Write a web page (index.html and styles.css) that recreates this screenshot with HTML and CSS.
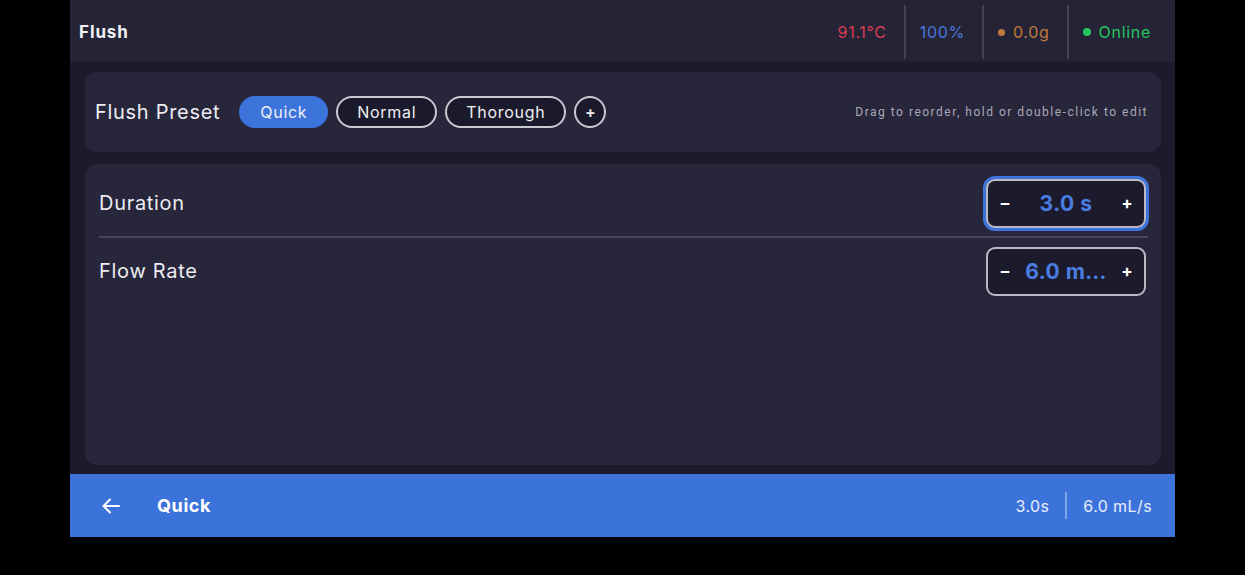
FILE: index.html
```html
<!DOCTYPE html>
<html lang="en">
	<head>
		<meta charset="UTF-8" />
		<title>Flush</title>
		<link rel="stylesheet" href="styles.css">
	</head>
	<body>
		<div class="app">
			<header class="topbar">
				<h1>Flush</h1>
				<div class="status">
					<span class="stat temp">91.1°C</span>
					<span class="stat level">100%</span>
					<span class="stat weight"><i class="dot"></i>0.0g</span>
					<span class="stat online"><i class="dot"></i>Online</span>
				</div>
			</header>

			<main class="content">
				<section class="card presets">
					<span class="presets-title">Flush Preset</span>
					<div class="chips">
						<button class="chip active">Quick</button>
						<button class="chip">Normal</button>
						<button class="chip">Thorough</button>
						<button class="chip add">+</button>
					</div>
					<span class="hint">Drag to reorder, hold or double-click to edit</span>
				</section>

				<section class="card settings">
					<div class="row">
						<span class="row-label">Duration</span>
						<div class="stepper focused">
							<button class="step">–</button>
							<span class="value">3.0 s</span>
							<button class="step">+</button>
						</div>
					</div>
					<div class="row">
						<span class="row-label">Flow Rate</span>
						<div class="stepper">
							<button class="step">–</button>
							<span class="value" title="6.0 mL/s">6.0 m…</span>
							<button class="step">+</button>
						</div>
					</div>
				</section>
			</main>

			<footer class="bottombar">
				<svg class="back" width="18" height="16" viewBox="0 0 18 16">
					<path d="M17 8H2M8 1.5L1.5 8 8 14.5" fill="none" stroke="#fff" stroke-width="2" stroke-linecap="round" stroke-linejoin="round"/>
				</svg>
				<span class="current">Quick</span>
				<div class="summary">
					<span>3.0s</span>
					<span class="sep"></span>
					<span>6.0 mL/s</span>
				</div>
			</footer>
		</div>
	</body>
</html>
```

FILE: styles.css
```css
body {
	margin: 0;
	background: #000;
	font-family: Inter, "Noto Sans", sans-serif;
	color: #ececf2;
}

.app {
	width: 1105px;
	height: 537px;
	margin-left: 70px;
	display: flex;
	flex-direction: column;
	background: #1c1b2c;
}

/* top bar */
.topbar {
	height: 62px;
	flex-shrink: 0;
	display: flex;
	align-items: center;
	justify-content: space-between;
	background: #252437;
	padding-left: 9px;
}

.topbar h1 {
	margin: 2px 0 0;
	font-size: 17px;
	font-weight: 700;
	letter-spacing: 0.9px;
	color: #f2f2f6;
}

.status {
	display: flex;
	align-self: stretch;
	padding: 5px 0 3px;
}

.stat {
	display: flex;
	align-items: center;
	padding: 0 17px 0 14px;
	font-size: 16px;
	letter-spacing: 0.7px;
	border-left: 2px solid #444356;
}

.stat:first-child {
	border-left: none;
}

.stat:last-child {
	padding-right: 24px;
}

.temp { color: #dc3a55; }
.level { color: #4878dc; }
.weight { color: #c27a3c; }
.online { color: #22c55e; }

.dot {
	width: 7px;
	height: 7px;
	border-radius: 50%;
	background: currentColor;
	margin-right: 8px;
}

.online .dot {
	width: 8px;
	height: 8px;
}

/* content */
.content {
	flex: 1;
	display: flex;
	flex-direction: column;
	gap: 12px;
	padding: 10px 14px 9px 15px;
}

.card {
	background: #27263a;
	border-radius: 12px;
}

.presets {
	height: 80px;
	display: flex;
	align-items: center;
	padding: 0 13px 0 10px;
}

.presets-title {
	font-size: 20px;
	letter-spacing: 0.7px;
	margin-right: 19px;
}

.chips {
	display: flex;
	gap: 8px;
}

.chip {
	height: 32px;
	padding: 0 19px;
	border: 2px solid #c9c9d2;
	border-radius: 16px;
	background: #1b1a2c;
	color: #f0f0f4;
	font-family: Inter, sans-serif;
	font-size: 16px;
	letter-spacing: 0.7px;
}

.chip.active {
	background: #3c74dc;
	border-color: #3c74dc;
	padding: 0 19px;
}

.chip.add {
	width: 32px;
	padding: 0;
	font-size: 16px;
	font-weight: 600;
	letter-spacing: 0;
}

.hint {
	margin-left: auto;
	font-family: Roboto, sans-serif;
	font-size: 12px;
	letter-spacing: 1.5px;
	color: #a9a9b6;
}

.settings {
	flex: 1;
	padding: 6px 13px 0 14px;
}

.row {
	height: 66px;
	display: flex;
	align-items: center;
	justify-content: space-between;
}

.row:first-child {
	border-bottom: 2px solid #48475a;
}

.row-label {
	font-size: 20px;
	letter-spacing: 0.7px;
}

.stepper {
	width: 156px;
	height: 45px;
	display: flex;
	align-items: center;
	justify-content: space-between;
	border: 2px solid #b9b9c3;
	border-radius: 9px;
	background: #1c1b2d;
	margin-right: 2px;
}

.stepper.focused {
	box-shadow: 0 0 0 3px #3c74dc;
}

.step {
	width: 34px;
	height: 100%;
	border: none;
	background: none;
	color: #fff;
	font-family: Inter, sans-serif;
	font-size: 17px;
	font-weight: 700;
	padding: 0;
}

.value {
	flex: 1;
	text-align: center;
	white-space: nowrap;
	font-size: 21px;
	font-weight: 700;
	letter-spacing: 0.5px;
	color: #4a7ee2;
}

/* bottom bar */
.bottombar {
	height: 63px;
	flex-shrink: 0;
	display: flex;
	align-items: center;
	background: #3c73db;
	padding: 0 23px 0 32px;
	color: #fff;
}

.back {
	margin-right: 37px;
}

.current {
	font-size: 18px;
	font-weight: 700;
	letter-spacing: 0.6px;
}

.summary {
	margin-left: auto;
	display: flex;
	align-items: center;
	gap: 16px;
	font-size: 16px;
	letter-spacing: 0.4px;
	color: #e8eefc;
}

.summary .sep {
	width: 2px;
	height: 27px;
	background: #7fa4ea;
}
```
